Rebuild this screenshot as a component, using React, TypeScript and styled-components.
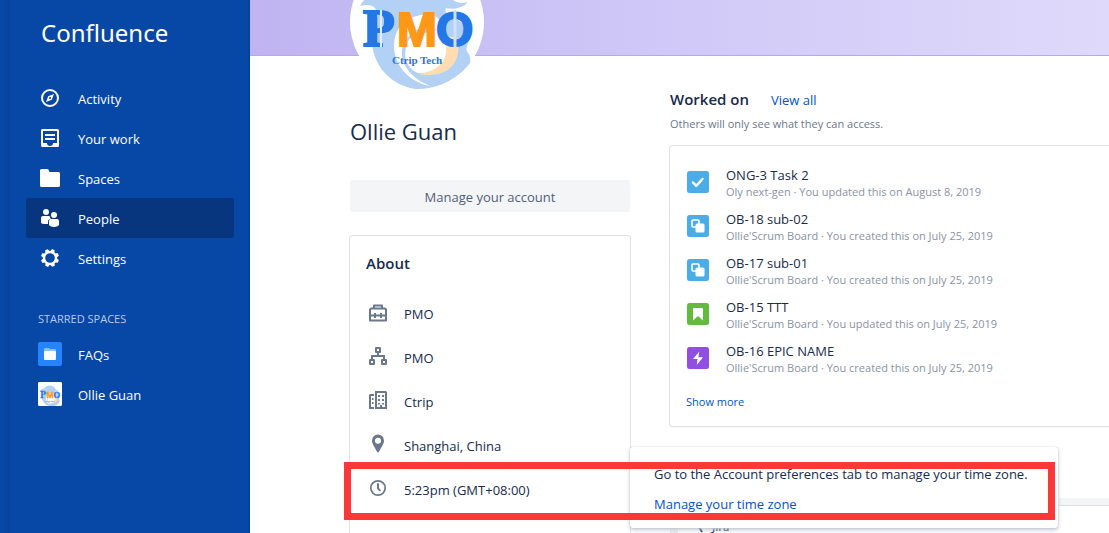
import React from "react";
import styled, { createGlobalStyle, css } from "styled-components";

const GlobalStyle = createGlobalStyle`
  *, *::before, *::after { box-sizing: border-box; }
  body { margin: 0; background: #fff; color: #172b4d; font: 400 13px/20px "Open Sans", "Noto Sans", sans-serif; }
  h1, h2, p, ul { margin: 0; padding: 0; }
  ul { list-style: none; }
  a { text-decoration: none; color: inherit; }
  svg { display: block; flex: none; }
`;

const Page = styled.div`
  display: flex;
  height: 100vh;
  overflow: hidden;
`;

const Rail = styled.div`
  flex: 0 0 10px;
  background: linear-gradient(to right, #0747a6 40%, #07409a);
`;

const Sidebar = styled.nav`
  flex: 0 0 240px;
  padding: 15px 16px 0;
  background: linear-gradient(to left, #073f94, #0747a6 3px);
  color: #fff;
`;

const Brand = styled.a`
  display: block;
  margin-bottom: 27px;
  padding: 0 15px;
  font: 400 24px/36px "Noto Sans", sans-serif;
`;

const NavLink = styled.a<{ $active?: boolean }>`
  display: flex;
  align-items: center;
  gap: 16px;
  height: 40px;
  padding: 0 12px;
  border-radius: 3px;
  ${(p) => p.$active && css`background: #07367f;`}
`;

const NavLabel = styled.span`
  padding-top: 2px;
`;

const GroupTitle = styled.h2`
  margin: 31px 12px 5px;
  font-size: 11px;
  line-height: 20px;
  font-weight: 400;
  color: #b8cbe8;
`;

const SpaceIcon = styled.span<{ $color: string }>`
  display: grid;
  place-items: center;
  width: 24px;
  height: 24px;
  border-radius: 2px;
  overflow: hidden;
  background: ${(p) => p.$color};
`;

const Main = styled.main`
  flex: 1;
  min-width: 0;
`;

const Banner = styled.div`
  height: 56px;
  border-bottom: 1px solid #b6abe0;
  background: linear-gradient(to right, #bfb4f1, #cfc7f7 45%, #dfdafb);
`;

const Columns = styled.div`
  display: flex;
  gap: 40px;
  padding-left: 100px;
`;

const Profile = styled.section`
  position: relative;
  z-index: 1;
  flex: 0 0 280px;
`;

const Avatar = styled.div`
  width: 134px;
  height: 134px;
  margin-top: -101px;
  border-radius: 50%;
  overflow: hidden;
`;

const Name = styled.h1`
  margin: 26px 0 33px;
  font-size: 22px;
  line-height: 32px;
  font-weight: 400;
`;

const ManageButton = styled.button`
  display: block;
  width: 100%;
  height: 32px;
  padding: 2px 0 0;
  border: 0;
  border-radius: 3px;
  background: #f4f5f7;
  color: #505f79;
  font: inherit;
`;

const Card = styled.div`
  border-radius: 3px;
  background: #fff;
  box-shadow: 0 0 0 1px #dfe1e6, 0 1px 1px #c1c7d0;
`;

const AboutCard = styled(Card)`
  margin-top: 24px;
  padding: 16px 16px 40px;
`;

const Heading = styled.h2`
  padding-bottom: 2px;
  font-size: 15px;
  line-height: 22px;
  font-weight: 600;
`;

const Facts = styled.ul`
  margin-top: 16px;
`;

const Fact = styled.li`
  position: relative;
  display: flex;
  align-items: center;
  gap: 14px;
  height: 44px;
  > svg { color: #6b778c; }
`;

const Activity = styled.section`
  flex: 1;
  min-width: 0;
  padding-top: 32px;
`;

const HeadingRow = styled.div`
  display: flex;
  align-items: baseline;
  gap: 22px;
`;

const Link = styled.a`
  color: #0052cc;
`;

const Hint = styled.p`
  margin: 2px 0 12px;
  font-size: 11px;
  color: #6b778c;
`;

const WorkCard = styled(Card)`
  margin-right: -8px;
  padding: 14px 16px;
`;

const WorkItem = styled.li`
  display: flex;
  align-items: center;
  gap: 16px;
  height: 44px;
`;

const WorkText = styled.div`
  padding-top: 2px;
`;

const WorkTitle = styled.a`
  display: block;
  line-height: 18px;
`;

const Meta = styled.div`
  font-size: 11px;
  line-height: 16px;
  color: #8993a4;
`;

const ShowMore = styled.button`
  display: block;
  margin-top: 12px;
  padding: 0;
  border: 0;
  background: none;
  color: #0052cc;
  font: inherit;
  font-size: 11px;
`;

const NextCard = styled.div`
  margin-top: 72px;
  border-top: 7px solid #f4f5f7;
`;

const NextRow = styled.div`
  display: flex;
  align-items: center;
  gap: 8px;
  height: 42px;
  padding-left: 20px;
  border-top: 1px solid #dfe1e6;
  border-left: 8px solid #ebecf0;
  font-size: 11px;
  font-weight: 600;
`;

const Tooltip = styled(Card)`
  position: absolute;
  z-index: 1;
  left: 264px;
  top: -21px;
  width: 428px;
  padding: 17px 24px 14px;
  box-shadow: 0 0 1px #a5adba, 0 2px 4px #c1c7d0;
  p + p { margin-top: 10px; }
`;

const Highlight = styled.div`
  position: absolute;
  z-index: 2;
  left: -22px;
  top: -6px;
  width: 711px;
  height: 58px;
  border: 7px solid #fc3737;
  pointer-events: none;
`;

const LogoArt = ({ size }: { size: number }) => (
  <svg width={size} height={size} viewBox="0 0 134 134" aria-hidden="true">
    <rect width="134" height="134" fill="#fff" />
    <path d="M10 51C14 43 22 38 34 36C46 14 88 14 98 40C103 48 112 49 118 47C113 53 104 55 96 53C94 56 97 60 103 62C112 67 118 73 119 83C118 91 114 94 119 99C124 111 116 130 79 135C45 136 24 114 22 88C22 74 26 66 28 60C26 49 18 49 10 51Z" fill="#b3d1f5" />
    <path d="M61 79C44 94 51 119 80 131C55 126 40 105 45 82C50 66 62 61 76 59C89 60 94 67 91 77C81 70 70 71 61 79Z" fill="#fff" />
    <path d="M60 83C51 97 55 113 68 118C82 119 93 112 97 100C99 89 97 79 88 74Z" fill="#fff" />
    <path d="M97 83C103 80 108 82 108 90C110 108 98 124 68 119C86 117 97 107 96 94Z" fill="#ffdcb1" />
    <g fontFamily="Liberation Sans, Arial, sans-serif" fontWeight="700" fontSize="48">
      <text x="13" y="91" fontFamily="Liberation Serif, serif" fontSize="52" fill="#2478e5" stroke="#2478e5" strokeWidth="2">P</text>
      <text x="47" y="91" fill="#ff9817" stroke="#ff9817" strokeWidth="2">M</text>
      <text x="86" y="91" fill="#2478e5" stroke="#2478e5" strokeWidth="2">O</text>
    </g>
    <path d="M31 55V92" stroke="#e4eefb" strokeWidth="2" />
    <path d="M105 55V92" stroke="#cfe1f8" strokeWidth="3" />
    <g fontFamily="Liberation Serif, serif" fontWeight="700" fontSize="11" fill="#2478e5">
      <text x="42" y="109">Ctrip</text>
      <text x="70" y="109">Tech</text>
    </g>
  </svg>
);

const Icon = ({ children, top = 0 }: { children: React.ReactNode; top?: number }) => (
  <svg width="24" height="24" viewBox={`0 ${top} 24 24`} fill="currentColor" aria-hidden="true">{children}</svg>
);

const line = { fill: "none", stroke: "currentColor", strokeWidth: 2 };

const CompassIcon = () => (
  <Icon top={-1}>
    <circle cx="12" cy="11" r="8" {...line} />
    <path fillRule="evenodd" d="M16 7l-2.2 5.8L8 15l2.2-5.8L16 7zm-4 3a1 1 0 1 0 0 2 1 1 0 0 0 0-2z" />
  </Icon>
);
const TrayIcon = () => (
  <Icon top={-1}>
    <path fillRule="evenodd" d="M4.500 2h15A1.500 1.500 0 0 1 21 3.500v15a1.500 1.500 0 0 1-1.500 1.500h-15A1.500 1.500 0 0 1 3 18.500v-15A1.500 1.500 0 0 1 4.500 2zM5 4v12h4a3 3 0 0 0 6 0h4V4H5z" />
    <path d="M7 7h10v2H7zM7 11h10v2H7z" />
  </Icon>
);
const FolderIcon = () => (
  <Icon top={-1}><path d="M3.500 2H9a2 2 0 0 1 2 2l.500 1h9A1.500 1.500 0 0 1 22 6.500v12a1.500 1.500 0 0 1-1.500 1.500h-17A1.500 1.500 0 0 1 2 18.500v-15A1.500 1.500 0 0 1 3.500 2z" /></Icon>
);
const PeopleIcon = () => (
  <Icon>
    <circle cx="8" cy="6" r="3" />
    <circle cx="16" cy="9" r="3" />
    <path d="M5 10h6.500a4 4 0 0 0 1.500 2.600c-2 .400-3 1.500-3 3.400v2c-3 .300-7 0-7-1.500V12a2 2 0 0 1 2-2z" />
    <path d="M13 13h6a2 2 0 0 1 2 2v3.500c0 3.300-10 3.300-10 0V15a2 2 0 0 1 2-2z" />
  </Icon>
);
const GearIcon = () => (
  <Icon top={-1}>
    <circle cx="12" cy="11" r="6" fill="none" stroke="currentColor" strokeWidth="2.400" />
    {[22, 67, 112, 157, 202, 247, 292, 337].map((a) => (
      <path key={a} d="M9.800 5l.700-3h3l.700 3z" transform={`rotate(${a} 12 11)`} />
    ))}
  </Icon>
);
const BriefcaseIcon = () => (
  <Icon>
    <path d="M8 6V3.500h8V6M4 12.500V7.500L5 6.500h14l1 1V18.500H4V12.500M4 13.500h16" {...line} strokeLinejoin="round" />
    <path d="M8 11h2v5H8zM14 11h2v5h-2z" />
  </Icon>
);
const OrgIcon = () => (
  <Icon top={1}>
    <path d="M10 3h4v4h-4zM4 15h4v4H4zM16 15h4v4h-4z" {...line} strokeLinejoin="round" />
    <path d="M12 7v4M6 15v-4h12v4" {...line} />
  </Icon>
);
const OfficeIcon = () => (
  <Icon top={1}>
    <path d="M10 3h9.500l.500.500V19H10zM8 6H4.500L4 6.500V19h4" {...line} />
    <path d="M12 6h2v2h-2zM16 6h2v2h-2zM12 10h2v2h-2zM16 10h2v2h-2zM12 14h2v1.500h-2zM16 14h2v1.500h-2zM14 16h2v3h-2zM6 9h1.500v2H6zM6 13h1.500v2H6z" />
  </Icon>
);
const PinIcon = () => (
  <Icon top={1}><path fillRule="evenodd" d="M12 1.500a6 6 0 0 1 6 6.200c0 3-3 7-5 11.100-.400.900-1.600.900-2 0-2-4.100-5-8.100-5-11.100a6 6 0 0 1 6-6.200zm0 3.300a3 3 0 1 0 0 6 3 3 0 0 0 0-6z" /></Icon>
);
const ClockIcon = () => (
  <Icon>
    <circle cx="12" cy="10" r="7.200" {...line} strokeWidth="1.700" />
    <path d="M12 6v4.300l1.800 2" {...line} strokeLinecap="round" />
  </Icon>
);

const issueShapes = {
  task: { color: "#4bade8", art: <path d="M7 12.500l3.200 3.300L16.500 9" fill="none" stroke="#fff" strokeWidth="2.500" strokeLinecap="round" strokeLinejoin="round" /> },
  subtask: {
    color: "#4bade8",
    art: (
      <>
        <rect x="6" y="6" width="7" height="7" rx="1" fill="none" stroke="#fff" strokeWidth="1.600" />
        <rect x="9.500" y="9.500" width="9" height="9" rx="1.500" fill="#fff" />
      </>
    ),
  },
  story: { color: "#63ba3c", art: <path d="M8 6h8a1 1 0 0 1 1 1v11.500l-5-4.500-5 4.500V7a1 1 0 0 1 1-1z" fill="#fff" /> },
  epic: { color: "#904ee2", art: <path d="M13.300 5.500L7 13h4.500l-.700 6 6.200-7.800h-4.600z" fill="#fff" /> },
};
type Kind = keyof typeof issueShapes;

const IssueIcon = ({ kind }: { kind: Kind }) => (
  <Icon>
    <rect x="1" y="1" width="22" height="22" rx="2.500" fill={issueShapes[kind].color} />
    {issueShapes[kind].art}
  </Icon>
);

const nav = [
  { label: "Activity", icon: <CompassIcon /> },
  { label: "Your work", icon: <TrayIcon /> },
  { label: "Spaces", icon: <FolderIcon /> },
  { label: "People", icon: <PeopleIcon />, active: true },
  { label: "Settings", icon: <GearIcon /> },
];

const facts = [
  { icon: <BriefcaseIcon />, text: "PMO" },
  { icon: <OrgIcon />, text: "PMO" },
  { icon: <OfficeIcon />, text: "Ctrip" },
  { icon: <PinIcon />, text: "Shanghai, China" },
];

const work: { kind: Kind; title: string; meta: string }[] = [
  { kind: "task", title: "ONG-3 Task 2", meta: "Oly next-gen · You updated this on August 8, 2019" },
  { kind: "subtask", title: "OB-18 sub-02", meta: "Ollie'Scrum Board · You created this on July 25, 2019" },
  { kind: "subtask", title: "OB-17 sub-01", meta: "Ollie'Scrum Board · You created this on July 25, 2019" },
  { kind: "story", title: "OB-15 TTT", meta: "Ollie'Scrum Board · You updated this on July 25, 2019" },
  { kind: "epic", title: "OB-16 EPIC NAME", meta: "Ollie'Scrum Board · You created this on July 25, 2019" },
];

export default function App() {
  return (
    <Page>
      <GlobalStyle />
      <Rail />
      <Sidebar>
        <Brand href="#">Confluence</Brand>
        {nav.map((n) => (
          <NavLink key={n.label} href="#" $active={n.active}>
            {n.icon}
            <NavLabel>{n.label}</NavLabel>
          </NavLink>
        ))}
        <GroupTitle>STARRED SPACES</GroupTitle>
        <NavLink href="#">
          <SpaceIcon $color="#2684ff">
            <svg width="12" height="12" viewBox="0 0 12 12" aria-hidden="true">
              <path d="M1 0h4l1 1h5a1 1 0 0 1 1 1v3H0V1a1 1 0 0 1 1-1z" fill="#7fc4ff" />
              <rect y="3" width="12" height="9" rx="1" fill="#fff" />
            </svg>
          </SpaceIcon>
          <NavLabel>FAQs</NavLabel>
        </NavLink>
        <NavLink href="#">
          <SpaceIcon $color="#fff"><LogoArt size={24} /></SpaceIcon>
          <NavLabel>Ollie Guan</NavLabel>
        </NavLink>
      </Sidebar>
      <Main>
        <Banner />
        <Columns>
          <Profile>
            <Avatar><LogoArt size={134} /></Avatar>
            <Name>Ollie Guan</Name>
            <ManageButton>Manage your account</ManageButton>
            <AboutCard>
              <Heading>About</Heading>
              <Facts>
                {facts.map((f, i) => (
                  <Fact key={i}>{f.icon}{f.text}</Fact>
                ))}
                <Fact>
                  <ClockIcon />
                  5:23pm (GMT+08:00)
                  <Tooltip>
                    <p>Go to the Account preferences tab to manage your time zone.</p>
                    <p><Link href="#">Manage your time zone</Link></p>
                  </Tooltip>
                  <Highlight />
                </Fact>
              </Facts>
            </AboutCard>
          </Profile>
          <Activity>
            <HeadingRow>
              <Heading>Worked on</Heading>
              <Link href="#">View all</Link>
            </HeadingRow>
            <Hint>Others will only see what they can access.</Hint>
            <WorkCard>
              <ul>
                {work.map((w) => (
                  <WorkItem key={w.title}>
                    <IssueIcon kind={w.kind} />
                    <WorkText>
                      <WorkTitle href="#">{w.title}</WorkTitle>
                      <Meta>{w.meta}</Meta>
                    </WorkText>
                  </WorkItem>
                ))}
              </ul>
              <ShowMore>Show more</ShowMore>
            </WorkCard>
            <NextCard>
              <NextRow>
                <svg width="6" height="12" viewBox="0 0 6 12" fill="none" stroke="#172b4d" strokeWidth="2" aria-hidden="true"><path d="M5 1L1 6l3 5" /></svg>
                Jira
              </NextRow>
            </NextCard>
          </Activity>
        </Columns>
      </Main>
    </Page>
  );
}
